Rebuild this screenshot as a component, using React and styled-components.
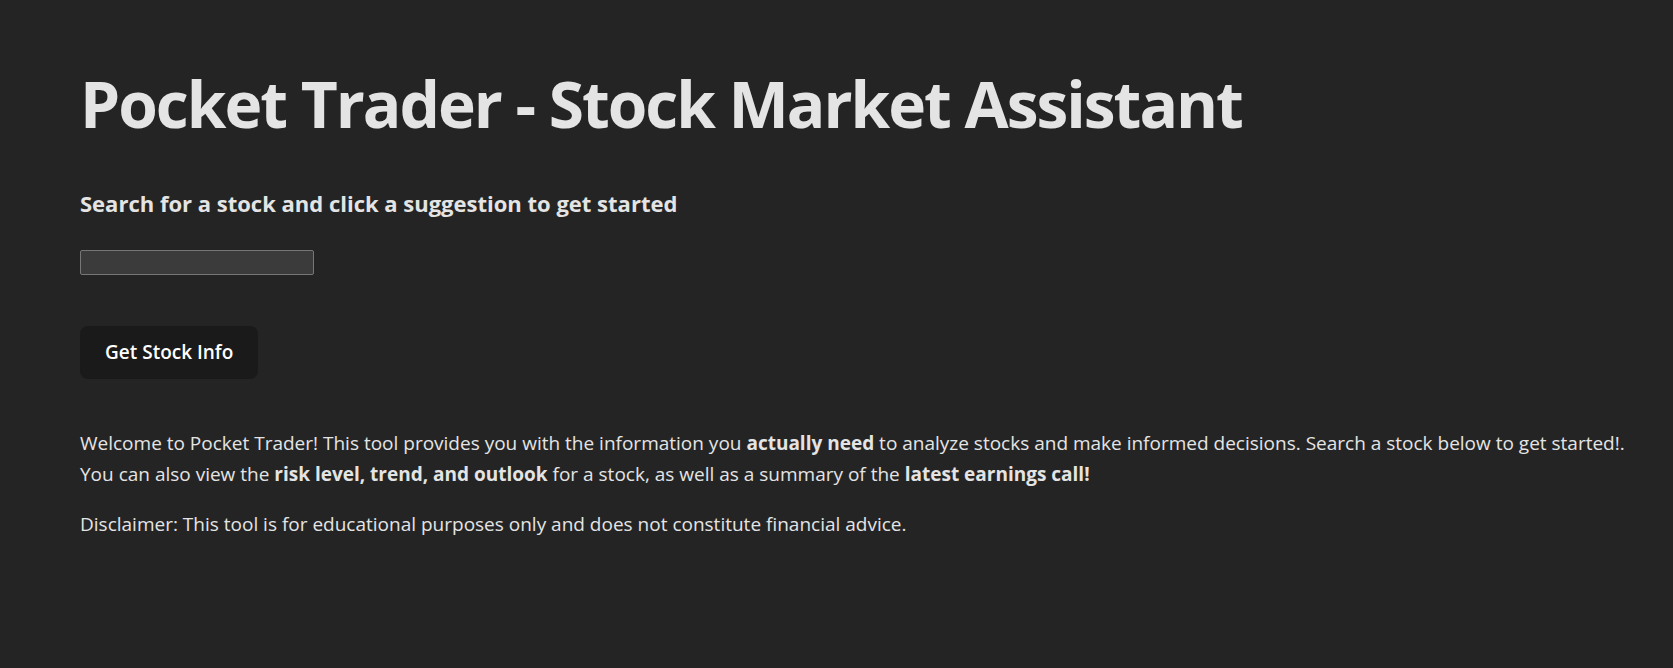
import React from 'react';
import styled, { createGlobalStyle } from 'styled-components';

const GlobalStyle = createGlobalStyle`
  html, body {
    margin: 0;
    padding: 0;
    background: #242424;
  }
  body {
    font-family: 'Open Sans', 'Noto Sans', sans-serif;
    color: rgba(255, 255, 255, 0.87);
    -webkit-font-smoothing: antialiased;
  }
`;

const Page = styled.main`
  min-height: 668px;
  box-sizing: border-box;
  padding: 69px 16px 40px 80px;
`;

const Title = styled.h1`
  margin: 0;
  font-size: 64px;
  font-weight: 700;
  line-height: 1.1;
  letter-spacing: -2px;
  color: #e4e4e4;
`;

const Prompt = styled.h3`
  margin: 50px 0 0;
  font-size: 22px;
  font-weight: 700;
  line-height: 1.3;
  color: #e4e4e4;
`;

const SearchInput = styled.input`
  display: block;
  margin-top: 32px;
  width: 234px;
  height: 25px;
  box-sizing: border-box;
  background: #3b3b3b;
  border: 1px solid #767676;
  border-radius: 2px;
  color: #fff;
  padding: 0 4px;
`;

const Button = styled.button`
  display: block;
  margin-top: 51px;
  height: 53px;
  padding: 0 24px;
  border: 1px solid transparent;
  border-radius: 8px;
  background: #1a1a1a;
  color: #fff;
  font-family: inherit;
  font-size: 19px;
  font-weight: 600;
  cursor: pointer;
`;

const Intro = styled.p`
  margin: 49px 0 0;
  font-size: 19px;
  line-height: 31px;
  color: #e4e4e4;

  & + & {
    margin-top: 19px;
  }

  strong {
    font-weight: 700;
  }
`;

export default function App() {
  return (
    <>
      <GlobalStyle />
      <Page>
        <Title>Pocket Trader - Stock Market Assistant</Title>
        <Prompt>Search for a stock and click a suggestion to get started</Prompt>
        <SearchInput type="text" />
        <Button>Get Stock Info</Button>
        <Intro>
          Welcome to Pocket Trader! This tool provides you with the information you <strong>actually need</strong> to
          analyze stocks and make informed decisions. Search a stock below to get started!.
          <br />
          You can also view the <strong>risk level, trend, and outlook</strong> for a stock, as well as a summary of
          the <strong>latest earnings call!</strong>
        </Intro>
        <Intro>Disclaimer: This tool is for educational purposes only and does not constitute financial advice.</Intro>
      </Page>
    </>
  );
}
